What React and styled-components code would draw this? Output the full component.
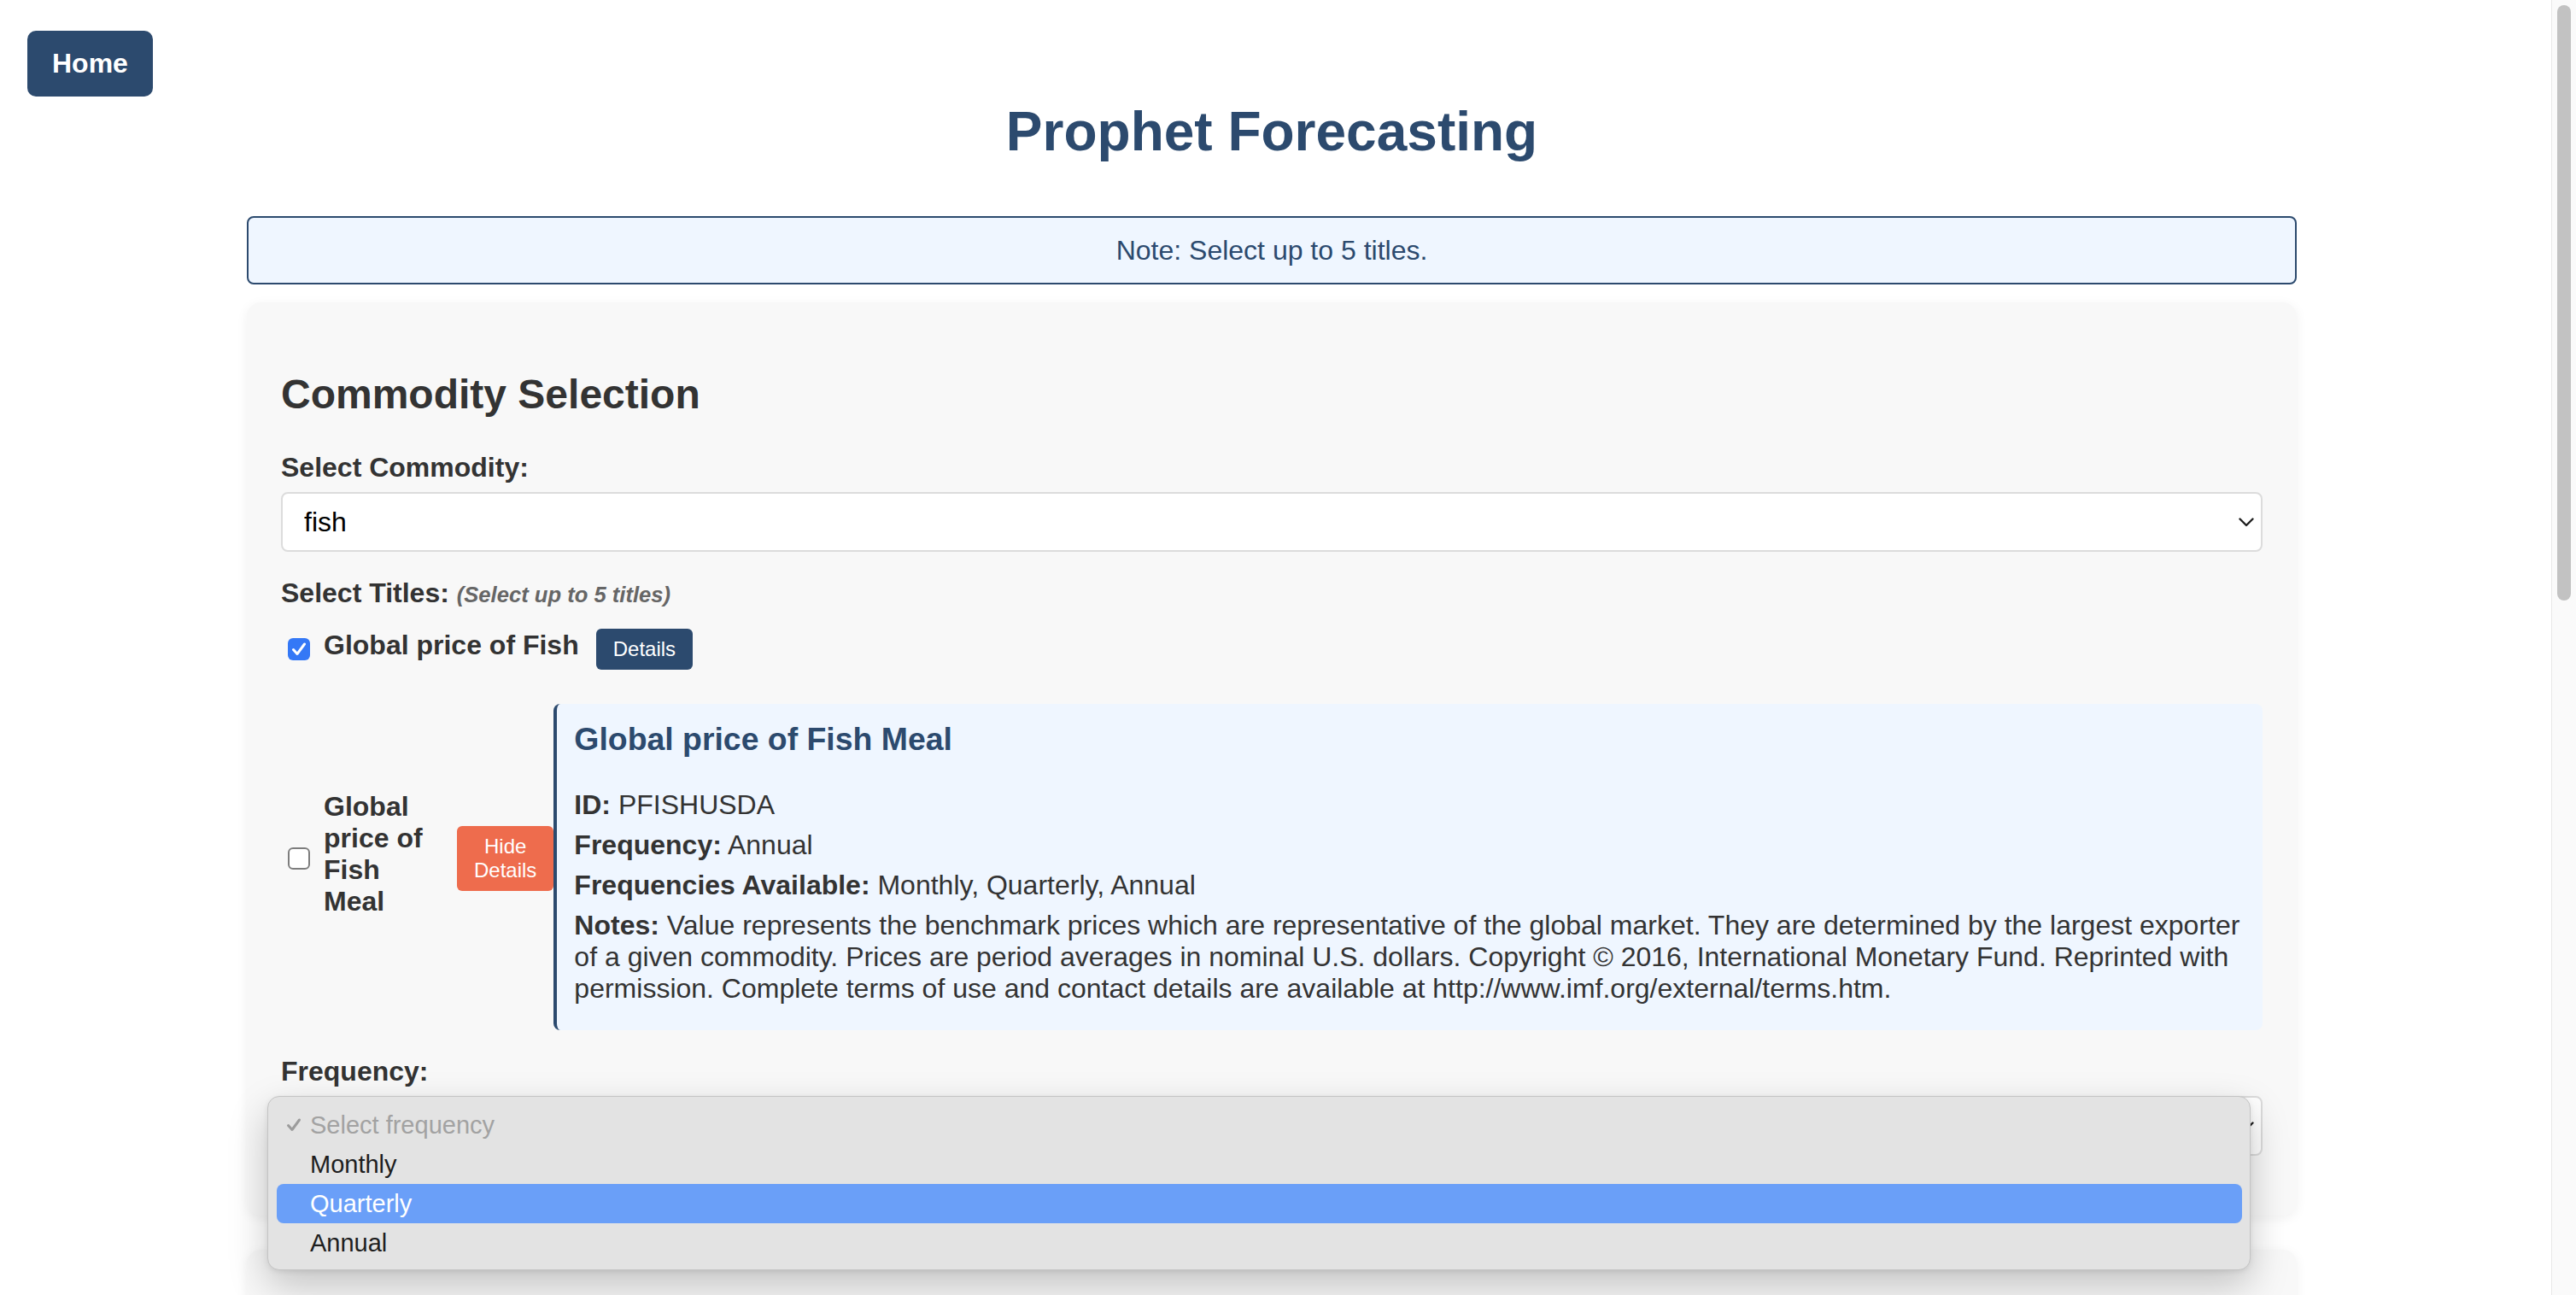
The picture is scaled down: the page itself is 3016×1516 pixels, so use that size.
import React from 'react'
import styled, { createGlobalStyle, css } from 'styled-components'

const GlobalStyle = createGlobalStyle`
    html, body {
        margin: 0;
        padding: 0;
        height: 100%;
        overflow: hidden;
        background: #ffffff;
        font-family: "Liberation Sans", Arial, Helvetica, sans-serif;
    }
    #root {
        height: 100%;
    }
`

const NAVY = '#2c4a6e'
const INK = '#333333'

const Shell = styled.div`
    display: grid;
    grid-template-columns: 1fr 29px;
    height: 100vh;
`

const Main = styled.main`
    display: flex;
    flex-direction: column;
    align-items: flex-start;
    overflow: hidden;
    min-width: 0;
`

const HomeButton = styled.button`
    margin: 36px 0 0 32px;
    padding: 20px 29px;
    border: none;
    border-radius: 10px;
    background: ${NAVY};
    color: #ffffff;
    font-family: inherit;
    font-size: 32px;
    font-weight: bold;
    line-height: 37px;
    cursor: pointer;
`

const Container = styled.div`
    width: 2400px;
    margin-left: 289px;
    flex: none;
`

const PageTitle = styled.h1`
    margin: 4px 0 62px;
    text-align: center;
    font-size: 64px;
    line-height: 74px;
    color: ${NAVY};
`

const Note = styled.div`
    padding: 20px;
    border: 2px solid ${NAVY};
    border-radius: 8px;
    background: #eff6ff;
    color: ${NAVY};
    font-size: 32px;
    line-height: 36px;
    text-align: center;
`

const Card = styled.section`
    margin-top: ${p => p.$gap}px;
    padding: 40px;
    min-height: ${p => p.$minHeight || 0}px;
    box-sizing: border-box;
    border-radius: 16px;
    background: #f8f8f8;
    box-shadow: 0 3px 14px rgba(0, 0, 0, 0.06);
`

const SectionTitle = styled.h2`
    margin: 40px 0 40px;
    font-size: 48px;
    line-height: 55px;
    color: ${INK};
`

const FormGroup = styled.div`
    margin-bottom: 30px;
`

const FieldLabel = styled.div`
    margin-bottom: 10px;
    font-size: 32px;
    font-weight: bold;
    line-height: 37px;
    color: ${INK};
`

const Hint = styled.span`
    font-size: 25.6px;
    font-style: italic;
    color: #666666;
`

const SelectWrap = styled.div`
    position: relative;
`

const SelectBox = styled.div`
    display: flex;
    align-items: center;
    justify-content: space-between;
    height: 70px;
    box-sizing: border-box;
    padding: 0 8px 0 25px;
    border: 2px solid #dcdcdc;
    border-radius: 8px;
    background: #ffffff;
    font-size: 32px;
    color: #000000;
`

const TitleList = styled.div`
    padding-top: 11px;
`

const TitleRow = styled.div`
    display: flex;
    align-items: center;
    margin-bottom: 20px;
`

const CheckBox = styled.span`
    flex: none;
    display: grid;
    place-items: center;
    width: 26px;
    height: 26px;
    margin: 6px 6px 6px 8px;
    box-sizing: border-box;
    border-radius: 6px;
    ${p => (p.$checked
        ? css`background: #3478f6;`
        : css`background: #ffffff; border: 2px solid #7d7d7d;`)}
`

const TitleLabel = styled.span`
    margin: 0 0 10px 10px;
    font-size: 32px;
    font-weight: bold;
    line-height: 37px;
    color: ${INK};
    ${p => p.$width && css`flex: 0 0 ${p.$width}px;`}
`

const SmallButton = styled.button`
    flex: none;
    margin-left: 20px;
    padding: 10px 20px;
    border: none;
    border-radius: 6px;
    background: ${p => (p.$danger ? '#ee6c4d' : NAVY)};
    color: #ffffff;
    font-family: inherit;
    font-size: 24px;
    line-height: 28px;
    cursor: pointer;
    ${p => p.$wrap && css`width: min-content;`}
`

const DetailsPanel = styled.div`
    flex: 1;
    min-width: 0;
    align-self: flex-start;
    margin-top: 20px;
    padding: 20px;
    border-left: 4px solid ${NAVY};
    border-radius: 8px;
    background: #eff6ff;
    color: ${INK};
`

const PanelTitle = styled.h3`
    margin: 0 0 37px;
    font-size: 37.4px;
    line-height: 43px;
    color: ${NAVY};
`

const PanelLine = styled.p`
    margin: 10px 0;
    font-size: 32px;
    line-height: 37px;
`

const Popup = styled.div`
    position: absolute;
    top: 0;
    left: -16px;
    right: 14px;
    padding: 10px 9px 8px 10px;
    border: 1px solid #c4c4c4;
    border-radius: 14px;
    background: #e3e3e3;
    box-shadow: 0 18px 46px rgba(0, 0, 0, 0.22), 0 2px 6px rgba(0, 0, 0, 0.08);
`

const PopupItem = styled.div`
    display: grid;
    grid-template-columns: 39px 1fr;
    align-items: center;
    height: 46px;
    border-radius: 8px;
    font-size: 29px;
    line-height: 46px;
    color: ${p => (p.$disabled ? '#a2a2a2' : p.$active ? '#ffffff' : '#1e1e1e')};
    background: ${p => (p.$active ? '#6a9ff8' : 'transparent')};
`

const CheckSlot = styled.span`
    display: flex;
    align-items: center;
    padding-left: 11px;
`

const ScrollTrack = styled.div`
    padding: 6px 6px 0;
    border-left: 1px solid #e8e8e8;
    background: #fafafa;
`

const ScrollThumb = styled.div`
    height: 697px;
    border-radius: 8px;
    background: #c2c2c2;
`

const Chevron = () => (
    <svg width="18" height="11" viewBox="0 0 18 11" fill="none">
        <polyline points="1.5,1.5 9,9 16.5,1.5" stroke="#1f1f1f" strokeWidth="2.4" strokeLinecap="round" strokeLinejoin="round" />
    </svg>
)

const Tick = ({ color, size }) => (
    <svg width={size} height={size} viewBox="0 0 18 18" fill="none">
        <polyline points="2.5,9.5 7,14.5 15.5,3" stroke={color} strokeWidth="3" strokeLinecap="round" strokeLinejoin="round" />
    </svg>
)

const FREQUENCIES = [
    { label: 'Select frequency', disabled: true, selected: true },
    { label: 'Monthly' },
    { label: 'Quarterly', active: true },
    { label: 'Annual' },
]

const NOTES = 'Value represents the benchmark prices which are representative of the global market. They are determined by the largest exporter of a given commodity. Prices are period averages in nominal U.S. dollars. Copyright © 2016, International Monetary Fund. Reprinted with permission. Complete terms of use and contact details are available at http://www.imf.org/external/terms.htm.'

export default function App() {
    return (
        <>
            <GlobalStyle />
            <Shell>
                <Main>
                    <HomeButton>Home</HomeButton>
                    <Container>
                        <PageTitle>Prophet Forecasting</PageTitle>
                        <Note>Note: Select up to 5 titles.</Note>

                        <Card $gap={21}>
                            <SectionTitle>Commodity Selection</SectionTitle>

                            <FormGroup>
                                <FieldLabel>Select Commodity:</FieldLabel>
                                <SelectBox>
                                    <span>fish</span>
                                    <Chevron />
                                </SelectBox>
                            </FormGroup>

                            <FormGroup>
                                <FieldLabel>
                                    Select Titles: <Hint>(Select up to 5 titles)</Hint>
                                </FieldLabel>
                                <TitleList>
                                    <TitleRow>
                                        <CheckBox $checked>
                                            <Tick color="#ffffff" size={18} />
                                        </CheckBox>
                                        <TitleLabel>Global price of Fish</TitleLabel>
                                        <SmallButton>Details</SmallButton>
                                    </TitleRow>
                                    <TitleRow>
                                        <CheckBox />
                                        <TitleLabel $width={136}>Global price of Fish Meal</TitleLabel>
                                        <SmallButton $danger $wrap>Hide Details</SmallButton>
                                        <DetailsPanel>
                                            <PanelTitle>Global price of Fish Meal</PanelTitle>
                                            <PanelLine><strong>ID:</strong> PFISHUSDA</PanelLine>
                                            <PanelLine><strong>Frequency:</strong> Annual</PanelLine>
                                            <PanelLine><strong>Frequencies Available:</strong> Monthly, Quarterly, Annual</PanelLine>
                                            <PanelLine><strong>Notes:</strong> {NOTES}</PanelLine>
                                        </DetailsPanel>
                                    </TitleRow>
                                </TitleList>
                            </FormGroup>

                            <FormGroup>
                                <FieldLabel>Frequency:</FieldLabel>
                                <SelectWrap>
                                    <SelectBox>
                                        <span />
                                        <Chevron />
                                    </SelectBox>
                                    <Popup>
                                        {FREQUENCIES.map(f => (
                                            <PopupItem key={f.label} $disabled={f.disabled} $active={f.active}>
                                                <CheckSlot>
                                                    {f.selected && <Tick color="#9c9c9c" size={18} />}
                                                </CheckSlot>
                                                <span>{f.label}</span>
                                            </PopupItem>
                                        ))}
                                    </Popup>
                                </SelectWrap>
                            </FormGroup>
                        </Card>

                        <Card $gap={40} $minHeight={320} />
                    </Container>
                </Main>
                <ScrollTrack>
                    <ScrollThumb />
                </ScrollTrack>
            </Shell>
        </>
    )
}
